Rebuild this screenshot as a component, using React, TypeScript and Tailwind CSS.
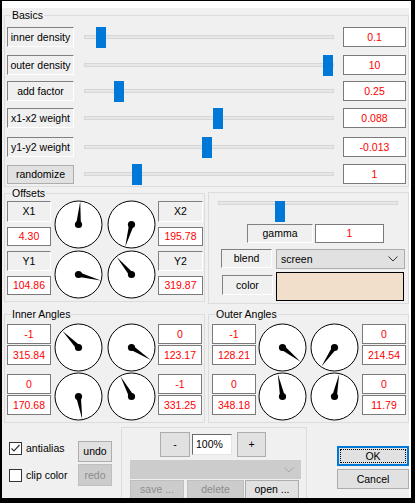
import React from "react"

type Cls = { className?: string; children?: React.ReactNode }

function Label({ className = "", children }: Cls) {
  return (
    <div
      className={`flex items-center justify-center bg-[#f0f0f0] border border-t-[#808080] border-l-[#808080] border-r-white border-b-white text-black ${className}`}
    >
      {children}
    </div>
  )
}

function Value({ className = "", children }: Cls) {
  return (
    <div className={`flex items-center justify-center bg-white border border-[#7a7a7a] text-[#ff0000] ${className}`}>
      {children}
    </div>
  )
}

function Btn({ className = "", children, disabled }: Cls & { disabled?: boolean }) {
  return (
    <div
      className={`flex items-center justify-center border ${
        disabled ? "bg-[#cccccc] border-[#bfbfbf] text-[#8d8d8d]" : "bg-[#e1e1e1] border-[#adadad] text-black"
      } ${className}`}
    >
      {children}
    </div>
  )
}

function Slider({ pos, className = "" }: { pos: number; className?: string }) {
  return (
    <div className={`relative h-[20px] ${className}`}>
      <div className="mt-[8px] h-[4px] bg-[#e7e7e7] border border-[#d6d6d6]" />
      <div className="absolute top-0 w-[10px] h-[21px] bg-[#0078d7]" style={{ left: pos }} />
    </div>
  )
}

function Dial({ angle }: { angle: number }) {
  const c = 24.5
  const R = 23.5
  const t = (angle * Math.PI) / 180
  const s = Math.sin(t)
  const co = Math.cos(t)
  const w = 2.4
  const pts = [
    [c + (R - 0.5) * s, c - (R - 0.5) * co],
    [c + w * co, c + w * s],
    [c - w * co, c - w * s],
  ]
    .map((p) => p.join(","))
    .join(" ")
  return (
    <svg width="49" height="49" viewBox="0 0 49 49" className="block">
      <circle cx={c} cy={c} r={R} fill="white" stroke="black" strokeWidth="1" />
      <polygon points={pts} fill="black" />
      <circle cx={c} cy={c} r="3.6" fill="black" />
    </svg>
  )
}

function Group({ title, className = "", children }: Cls & { title?: string }) {
  return (
    <fieldset className={`border border-[#dcdcdc] ${className}`}>
      {title && <legend className="ml-[6px] px-[1px] leading-[13px]">{title}</legend>}
      {children}
    </fieldset>
  )
}

const basics = [
  { label: "inner density", value: "0.1", pos: 12, mt: "mt-[5px]" },
  { label: "outer density", value: "10", pos: 239, mt: "mt-[8px]" },
  { label: "add factor", value: "0.25", pos: 30, mt: "mt-[6px]" },
  { label: "x1-x2 weight", value: "0.088", pos: 129, mt: "mt-[7px]" },
  { label: "y1-y2 weight", value: "-0.013", pos: 118, mt: "mt-[9px]" },
  { label: "randomize", value: "1", pos: 48, mt: "mt-[7px]", button: true },
]

function AngleQuad({
  l,
  r,
  a,
  gaps,
}: {
  l: string[]
  r: string[]
  a: number[]
  gaps: string[]
}) {
  return (
    <div className="flex items-start">
      <div className={`flex flex-col w-[44px] mt-[3px] ${gaps[0]}`}>
        <Value className="h-[20px]">{l[0]}</Value>
        <Value className="h-[20px] mt-[1px]">{l[1]}</Value>
        <Value className="h-[20px] mt-[9px]">{l[2]}</Value>
        <Value className="h-[20px] mt-[1px]">{l[3]}</Value>
      </div>
      <div className={`flex flex-col mt-[2px] ${gaps[1]}`}>
        <Dial angle={a[0]} />
        <Dial angle={a[2]} />
      </div>
      <div className={`flex flex-col mt-[2px] ${gaps[2]}`}>
        <Dial angle={a[1]} />
        <Dial angle={a[3]} />
      </div>
      <div className={`flex flex-col w-[44px] mt-[3px] ${gaps[3]}`}>
        <Value className="h-[20px]">{r[0]}</Value>
        <Value className="h-[20px] mt-[1px]">{r[1]}</Value>
        <Value className="h-[20px] mt-[9px]">{r[2]}</Value>
        <Value className="h-[20px] mt-[1px]">{r[3]}</Value>
      </div>
    </div>
  )
}

function Check({ on }: { on?: boolean }) {
  return (
    <div className="w-[13px] h-[13px] bg-white border border-[#333333] flex items-center justify-center">
      {on && (
        <svg width="11" height="11" viewBox="0 0 11 11">
          <polyline points="1.5,5.5 4,8 9.5,2" fill="none" stroke="#333" strokeWidth="1.2" />
        </svg>
      )}
    </div>
  )
}

function Chevron({ color = "#333" }: { color?: string }) {
  return (
    <svg width="10" height="6" viewBox="0 0 10 6">
      <polyline points="0.5,0.5 5,5 9.5,0.5" fill="none" stroke={color} strokeWidth="1" />
    </svg>
  )
}

export default function App() {
  return (
    <div className="w-[415px] h-[503px] bg-black pt-[1px] pl-[2px] pr-[4px] pb-[5px] font-['Liberation_Sans',Arial,sans-serif] text-[10.5px] leading-[13px] text-black">
      <div className="h-full bg-[#f0f0f0] border-t-[7px] border-r-2 border-white overflow-hidden">
        {/* Basics */}
        <Group title="Basics" className="ml-[2px] mt-[1px] pb-[2px]">
          <div className="pl-[2px]">
            {basics.map((b) => (
              <div key={b.label} className={`flex items-start h-[20px] ${b.mt}`}>
                {b.button ? (
                  <Btn className="w-[67px] h-[19px] mt-[1px]">{b.label}</Btn>
                ) : (
                  <Label className="w-[67px] h-[20px]">{b.label}</Label>
                )}
                <Slider pos={b.pos} className="w-[250px] ml-[10px] mr-[9px]" />
                <Value className="w-[63px] h-[20px]">{b.value}</Value>
              </div>
            ))}
          </div>
        </Group>

        {/* Offsets + gamma */}
        <div className="flex items-start">
          <Group title="Offsets" className="ml-[2px] w-[201px] pb-[2px]">
            <div className="flex items-start pl-[2px] pt-[1px]">
              <div className="flex flex-col w-[44px]">
                <Label className="h-[21px]">X1</Label>
                <Value className="h-[19px] mt-[5px]">4.30</Value>
                <Label className="h-[20px] mt-[5px]">Y1</Label>
                <Value className="h-[19px] mt-[5px]">104.86</Value>
              </div>
              <div className="flex flex-col gap-[1px] ml-[3px] -mt-[1px]">
                <Dial angle={4.3} />
                <Dial angle={104.86} />
              </div>
              <div className="flex flex-col gap-[1px] ml-[4px] -mt-[1px]">
                <Dial angle={195.78} />
                <Dial angle={319.87} />
              </div>
              <div className="flex flex-col w-[45px] ml-[2px]">
                <Label className="h-[21px]">X2</Label>
                <Value className="h-[19px] mt-[5px]">195.78</Value>
                <Label className="h-[20px] mt-[5px]">Y2</Label>
                <Value className="h-[19px] mt-[5px]">319.87</Value>
              </div>
            </div>
          </Group>

          <Group className="ml-[3px] mt-[5px] w-[201px] pb-[2px]">
            <Slider pos={57} className="w-[180px] ml-[9px] mt-[5px] h-[21px]" />
            <div className="flex items-start ml-[38px] mt-[2px]">
              <Label className="w-[66px] h-[19px]">gamma</Label>
              <Value className="w-[69px] h-[19px] ml-[2px]">1</Value>
            </div>
            <div className="flex items-start ml-[12px] mt-[6px]">
              <Label className="w-[51px] h-[19px]">blend</Label>
              <div className="ml-[4px] w-[129px] h-[20px] bg-[#e1e1e1] border border-[#adadad] flex items-center justify-between pl-[4px] pr-[6px]">
                <span>screen</span>
                <Chevron />
              </div>
            </div>
            <div className="flex items-start ml-[13px] mt-[3px]">
              <Label className="w-[51px] h-[20px] mt-[3px]">color</Label>
              <div className="ml-[3px] w-[128px] h-[29px] bg-[#f1decb] border border-black" />
            </div>
          </Group>
        </div>

        {/* Angles */}
        <div className="flex items-start mt-[4px]">
          <Group title="Inner Angles" className="ml-[2px] w-[201px] pb-[1px]">
            <AngleQuad
              l={["-1", "315.84", "0", "170.68"]}
              r={["0", "123.17", "-1", "331.25"]}
              a={[315.84, 123.17, 170.68, 331.25]}
              gaps={["ml-[2px]", "ml-[3px]", "ml-[4px]", "ml-[2px]"]}
            />
          </Group>
          <Group title="Outer Angles" className="ml-[3px] w-[201px] pb-[1px]">
            <AngleQuad
              l={["-1", "128.21", "0", "348.18"]}
              r={["0", "214.54", "0", "11.79"]}
              a={[128.21, 214.54, 348.18, 11.79]}
              gaps={["ml-[3px]", "ml-[2px]", "ml-[3px]", "ml-[3px]"]}
            />
          </Group>
        </div>

        {/* Bottom */}
        <div className="flex items-start">
          <div className="ml-[7px] w-[62px] mt-[19px]">
            <div className="flex items-center h-[13px]">
              <Check on />
              <span className="ml-[4px]">antialias</span>
            </div>
            <div className="flex items-center h-[13px] mt-[14px]">
              <Check />
              <span className="ml-[4px]">clip color</span>
            </div>
          </div>
          <div className="ml-[7px] w-[34px] mt-[18px] flex flex-col">
            <Btn className="h-[21px]">undo</Btn>
            <Btn disabled className="h-[22px] mt-[2px]">
              redo
            </Btn>
          </div>
          <Group className="ml-[9px] w-[186px] h-[100px] mt-[4px]">
            <div className="flex items-start ml-[38px] mt-[4px]">
              <Btn className="w-[30px] h-[25px]">-</Btn>
              <div className="ml-[2px] mt-[2px] w-[40px] h-[21px] bg-white border border-t-[#696969] border-l-[#696969] border-r-[#e3e3e3] border-b-[#e3e3e3] flex items-center pl-[3px]">
                100%
              </div>
              <Btn className="ml-[5px] w-[29px] h-[25px]">+</Btn>
            </div>
            <div className="ml-[8px] mt-[3px] w-[171px] h-[19px] bg-[#cccccc] border border-[#cccccc] flex items-center justify-end pr-[6px]">
              <Chevron color="#a8a8a8" />
            </div>
            <div className="flex items-start ml-[8px] mt-[1px]">
              <Btn disabled className="w-[54px] h-[19px]">
                save ...
              </Btn>
              <Btn disabled className="ml-[3px] w-[57px] h-[19px]">
                delete
              </Btn>
              <Btn className="ml-[1px] w-[54px] h-[19px]">open ...</Btn>
            </div>
          </Group>
          <div className="ml-[30px] w-[72px] mt-[23px] flex flex-col">
            <div className="h-[20px] bg-[#e1e1e1] border-2 border-[#0078d7] flex">
              <div className="flex-1 m-[1px] border border-dotted border-black flex items-center justify-center">
                OK
              </div>
            </div>
            <Btn className="h-[20px] mt-[3px]">Cancel</Btn>
          </div>
        </div>
      </div>
    </div>
  )
}
